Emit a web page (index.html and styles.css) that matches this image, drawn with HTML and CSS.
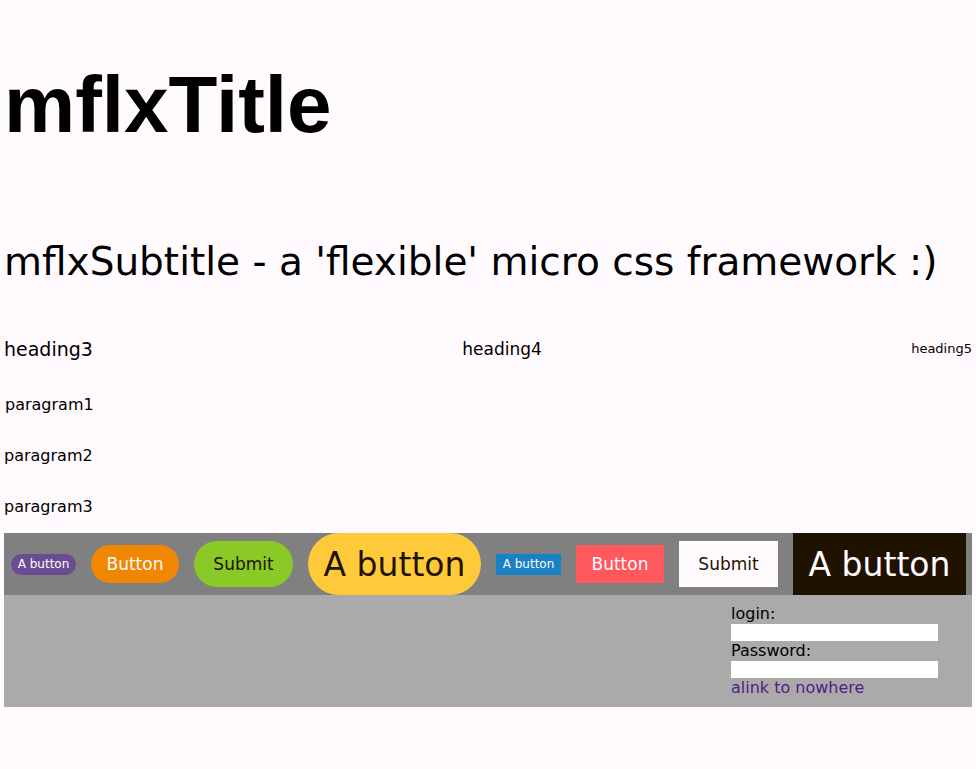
FILE: index.html
```html
<!DOCTYPE html>
<html>
<head>
<meta charset="utf-8">
<title>mflx</title>
<link rel="stylesheet" href="styles.css">
</head>
<body>
<div class="page">
  <h1 class="title">mflxTitle</h1>
  <h2 class="subtitle">mflxSubtitle - a 'flexible' micro css framework :)</h2>
  <div class="heading-row">
    <h3 class="h3">heading3</h3>
    <h4 class="h4">heading4</h4>
    <h5 class="h5">heading5</h5>
  </div>
  <p class="para para1">paragram1</p>
  <p class="para">paragram2</p>
  <p class="para">paragram3</p>
  <div class="button-bar">
    <button class="btn round size-s c-purple">A button</button>
    <button class="btn round size-m c-orange">Button</button>
    <button class="btn round size-l c-green">Submit</button>
    <button class="btn round size-xl c-yellow">A button</button>
    <button class="btn size-s c-blue">A button</button>
    <button class="btn size-m c-red">Button</button>
    <button class="btn size-l c-white">Submit</button>
    <button class="btn size-xl c-dark">A button</button>
  </div>
  <div class="form-bar">
    <form class="login">
      <label class="label" for="login">login:</label>
      <input class="field" id="login" type="text">
      <label class="label" for="pw">Password:</label>
      <input class="field" id="pw" type="password">
      <a class="link" href="#">alink to nowhere</a>
    </form>
  </div>
</div>
</body>
</html>
```
FILE: styles.css
```css
html, body {
  margin: 0;
  padding: 0;
  background: #fffafd;
}
body {
  font-family: "DejaVu Sans", "Noto Sans", sans-serif;
  color: #000;
}
.page {
  padding: 0 4px;
}
.title {
  font-family: "Liberation Sans", Arial, sans-serif;
  font-weight: 700;
  font-size: 80px;
  line-height: 92px;
  margin: 0;
  padding-top: 59px;
}
.subtitle {
  font-weight: 400;
  font-size: 39px;
  line-height: 47px;
  margin: 87px 0 0 0;
  white-space: nowrap;
}
.heading-row {
  display: flex;
  justify-content: space-between;
  align-items: center;
  height: 22px;
  margin-top: 53px;
}
.heading-row h3, .heading-row h4, .heading-row h5 {
  margin: 0;
  font-weight: 400;
  line-height: 22px;
}
.h3 { font-size: 19px; }
.h4 { font-size: 17px; }
.h5 { font-size: 13px; }
.para {
  font-size: 16px;
  line-height: 19px;
  margin: 32px 0 0 0;
}
.para1 {
  margin-top: 35px;
  padding-left: 1px;
}
.button-bar {
  display: flex;
  align-items: center;
  background: #808080;
  height: 62px;
  margin-top: 17px;
  padding-left: 7px;
  gap: 15px;
}
.btn {
  font-family: "DejaVu Sans", "Noto Sans", sans-serif;
  border: none;
  padding: 0;
  display: flex;
  align-items: center;
  justify-content: center;
  white-space: nowrap;
}
.round { border-radius: 999px; }
.size-s { width: 65px; height: 21px; font-size: 12px; }
.size-m { width: 88px; height: 38px; font-size: 17px; }
.size-l { width: 99px; height: 46px; font-size: 17px; }
.size-xl { width: 173px; height: 62px; font-size: 33px; }
.c-purple { background: #6a4c93; color: #fffafd; }
.c-orange { background: #f18701; color: #fffafd; }
.c-green { background: #8ac926; color: #1f1300; }
.c-yellow { background: #ffca3a; color: #1f1300; }
.c-blue { background: #1982c4; color: #fffafd; }
.c-red { background: #ff595e; color: #fffafd; }
.c-white { background: #fffafd; color: #1f1300; }
.c-dark { background: #1f1300; color: #fffafd; }
.form-bar {
  display: flex;
  justify-content: flex-end;
  background: #aaaaaa;
  padding: 9px 34px 9px 0;
}
.login {
  display: flex;
  flex-direction: column;
  width: 207px;
  margin: 0;
}
.label {
  font-size: 16px;
  line-height: 20px;
  height: 20px;
}
.field {
  border: none;
  margin: 0;
  padding: 0;
  height: 17px;
  background: #fff;
}
.link {
  font-size: 16px;
  line-height: 20px;
  color: #551a8b;
  text-decoration: none;
}
```
